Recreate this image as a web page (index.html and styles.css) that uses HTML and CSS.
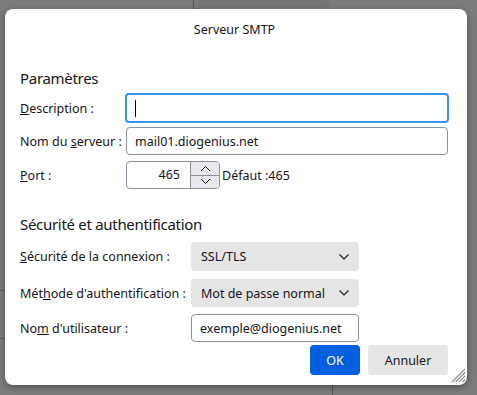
FILE: index.html
```html
<!DOCTYPE html>
<html lang="fr">
<head>
    <meta charset="UTF-8">
    <title>Serveur SMTP</title>
    <link rel="stylesheet" href="styles.css">
</head>
<body>
    <div class="backdrop">
        <div class="bg-line bg-top-line"></div>
        <div class="bg-box"></div>
        <div class="bg-line bg-bottom-line"></div>
        <div class="bg-hline bg-hline-1"></div>
        <div class="bg-hline bg-hline-2"></div>
    </div>

    <div class="dialog">
        <div class="dialog-title">Serveur SMTP</div>

        <div class="section">
            <h2>Paramètres</h2>
            <div class="form-grid grid-server">
                <label><u>D</u>escription :</label>
                <div class="field focused"><span class="caret"></span></div>

                <label>Nom du <u>s</u>erveur :</label>
                <div class="field">mail01.diogenius.net</div>

                <label class="port-label"><u>P</u>ort :</label>
                <div class="port-row">
                    <div class="number">
                        <span class="number-value">465</span>
                        <span class="spin">
                            <span class="spin-btn">
                                <svg width="11" height="7" viewBox="0 0 11 7"><path d="M1 6 L5.5 1.5 L10 6" fill="none" stroke="#15141a" stroke-width="1"/></svg>
                            </span>
                            <span class="spin-btn">
                                <svg width="11" height="7" viewBox="0 0 11 7"><path d="M1 1 L5.5 5.5 L10 1" fill="none" stroke="#15141a" stroke-width="1"/></svg>
                            </span>
                        </span>
                    </div>
                    <span class="port-default">Défaut :465</span>
                </div>
            </div>
        </div>

        <div class="section section-security">
            <h2>Sécurité et authentification</h2>
            <div class="form-grid grid-security">
                <label><u>S</u>écurité de la connexion :</label>
                <div class="select">
                    <span>SSL/TLS</span>
                    <svg width="10" height="6" viewBox="0 0 10 6"><path d="M0.5 0.5 L5 5 L9.5 0.5" fill="none" stroke="#15141a" stroke-width="1.1"/></svg>
                </div>

                <label class="shifted">Mét<u>h</u>ode d'authentification :</label>
                <div class="select shifted">
                    <span>Mot de passe normal</span>
                    <svg width="10" height="6" viewBox="0 0 10 6"><path d="M0.5 0.5 L5 5 L9.5 0.5" fill="none" stroke="#15141a" stroke-width="1.1"/></svg>
                </div>

                <label>No<u>m</u> d'utilisateur :</label>
                <div class="field">exemple@diogenius.net</div>
            </div>
        </div>

        <div class="actions">
            <button class="btn btn-primary">OK</button>
            <button class="btn">Annuler</button>
        </div>

        <svg class="grip" width="15" height="15" viewBox="0 0 15 15">
            <path d="M14 1 L1 14 M14 4.5 L4.5 14 M14 8 L8 14 M14 11.5 L11.5 14" stroke="#8a8a8a" stroke-width="1.1" fill="none"/>
        </svg>
    </div>
</body>
</html>
```

FILE: styles.css
```css
body {
    margin: 0;
    width: 477px;
    height: 395px;
    background: #7b7b7b;
    font-family: 'Noto Sans', sans-serif;
    font-size: 12.5px;
    color: #15141a;
    overflow: hidden;
    position: relative;
}
.backdrop {
    position: absolute;
    inset: 0;
}
.bg-line {
    position: absolute;
    width: 1px;
    background: #555;
}
.bg-top-line {
    left: 193px;
    top: 0;
    height: 9px;
}
.bg-bottom-line {
    left: 332px;
    top: 385px;
    height: 10px;
}
.bg-box {
    position: absolute;
    left: 198px;
    top: 0;
    width: 131px;
    height: 8px;
    background: #747474;
    border-radius: 0 0 3px 3px;
}
.bg-hline {
    position: absolute;
    left: 0;
    width: 6px;
    height: 1px;
    background: #5c5c5c;
}
.bg-hline-1 { top: 290px; }
.bg-hline-2 { top: 338px; }

.dialog {
    position: relative;
    margin: 9px 0 0 5px;
    width: 462px;
    height: 376px;
    box-sizing: border-box;
    padding: 0 19px 0 15px;
    background: #fff;
    border-radius: 8px;
    box-shadow: 0 2px 6px rgba(0, 0, 0, 0.35);
    display: flex;
    flex-direction: column;
}
.dialog-title {
    text-align: center;
    margin-top: 12px;
    line-height: 18px;
    padding-left: 1px;
}
h2 {
    font-size: 15px;
    font-weight: normal;
    letter-spacing: -0.3px;
    margin: 0;
    line-height: 22px;
}
.section {
    margin-top: 28px;
}
.section h2 {
    margin-bottom: 5px;
}
.section-security {
    margin-top: 24px;
}
.section-security h2 {
    margin-bottom: 7px;
}
.form-grid {
    display: grid;
    align-items: center;
}
.grid-server {
    grid-template-columns: 106px 1fr;
    row-gap: 5px;
}
.grid-security {
    grid-template-columns: 171px 168px;
    row-gap: 7px;
}
label {
    white-space: nowrap;
}
.port-label, .port-row {
    margin-top: 1px;
}
.shifted {
    margin-top: 1px;
}
.field {
    height: 28px;
    box-sizing: border-box;
    border: 1px solid #8f8f9d;
    border-radius: 4px;
    padding: 0 8px;
    display: flex;
    align-items: center;
    white-space: nowrap;
}
.field.focused {
    height: 30px;
    margin: -1px -1px;
    border: 2px solid #3b93ea;
    padding-left: 8px;
}
.caret {
    width: 1px;
    height: 17px;
    background: #000;
}
.port-row {
    display: flex;
    align-items: center;
}
.number {
    width: 94px;
    height: 28px;
    box-sizing: border-box;
    border: 1px solid #8f8f9d;
    border-radius: 4px;
    display: flex;
    overflow: hidden;
}
.number-value {
    flex: 1;
    text-align: right;
    padding-right: 10px;
    line-height: 26px;
}
.spin {
    width: 28px;
    display: flex;
    flex-direction: column;
    border-left: 1px solid #8f8f9d;
}
.spin-btn {
    flex: 1;
    display: flex;
    align-items: center;
    justify-content: center;
    background: #e9e9ed;
}
.spin-btn + .spin-btn {
    border-top: 1px solid #8f8f9d;
}
.port-default {
    margin-left: 2px;
}
.select {
    height: 29px;
    box-sizing: border-box;
    background: #e5e5e5;
    border-radius: 4px;
    padding: 0 10px;
    display: flex;
    align-items: center;
    justify-content: space-between;
    white-space: nowrap;
}
.select.shifted {
    height: 28px;
}
.actions {
    display: flex;
    justify-content: flex-end;
    gap: 8px;
    margin-top: 3px;
}
.btn {
    font-family: inherit;
    font-size: 12.5px;
    color: #15141a;
    height: 30px;
    border: none;
    border-radius: 4px;
    background: #e5e5e5;
    width: 80px;
    padding: 0;
}
.btn-primary {
    width: 50px;
    background: #0060df;
    color: #fff;
}
.grip {
    position: absolute;
    right: 1px;
    bottom: 2px;
}
```
